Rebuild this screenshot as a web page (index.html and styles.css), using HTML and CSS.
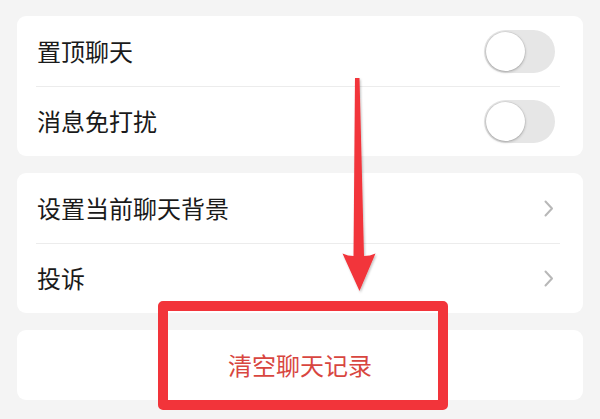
FILE: index.html
```html
<!DOCTYPE html>
<html lang="zh-CN">
<head>
    <meta charset="UTF-8">
    <meta name="viewport" content="width=device-width, initial-scale=1.0">
    <title>聊天设置</title>
    <link rel="stylesheet" href="styles.css">
</head>
<body>
    <div class="page">
        <div class="card">
            <div class="row">
                <span class="row-label">置顶聊天</span>
                <span class="switch"><span class="switch-knob"></span></span>
            </div>
            <div class="row">
                <span class="row-label">消息免打扰</span>
                <span class="switch"><span class="switch-knob"></span></span>
            </div>
        </div>

        <div class="card">
            <div class="row">
                <span class="row-label">设置当前聊天背景</span>
                <svg class="chevron" width="10" height="17" viewBox="0 0 10 17">
                    <path d="M1.5 1.5 L8 8.5 L1.5 15.5" fill="none" stroke="#b8b8b8" stroke-width="2" stroke-linecap="round" stroke-linejoin="round"/>
                </svg>
            </div>
            <div class="row">
                <span class="row-label">投诉</span>
                <svg class="chevron" width="10" height="17" viewBox="0 0 10 17">
                    <path d="M1.5 1.5 L8 8.5 L1.5 15.5" fill="none" stroke="#b8b8b8" stroke-width="2" stroke-linecap="round" stroke-linejoin="round"/>
                </svg>
            </div>
        </div>

        <div class="card">
            <div class="row row-center">
                <span class="danger">清空聊天记录</span>
            </div>
        </div>
    </div>

    <!-- 标注：箭头和红框 -->
    <svg class="mark-arrow" width="600" height="419" viewBox="0 0 600 419">
        <defs>
            <filter id="shadow" x="-20%" y="-20%" width="140%" height="140%">
                <feDropShadow dx="1" dy="1.5" stdDeviation="1.2" flood-color="#000" flood-opacity="0.25"/>
            </filter>
        </defs>
        <path d="M355 78 L359.5 78 L364 256 Q370 256 375.5 253.5 L359.5 291 L342.5 253.5 Q348 256 353.5 256 Z" fill="#f2343a" filter="url(#shadow)"/>
    </svg>
    <div class="mark-box"></div>
</body>
</html>
```

FILE: styles.css
```css
body {
    margin: 0;
    padding: 0;
    background-color: #f4f4f4;
    font-family: "Noto Sans CJK SC", "Noto Sans", sans-serif;
    color: #1a1a1a;
}

.page {
    padding: 16px 17px;
    display: flex;
    flex-direction: column;
    gap: 17px;
}

.card {
    background-color: #fff;
    border-radius: 9px;
}

.row {
    height: 70px;
    display: flex;
    align-items: center;
    justify-content: space-between;
    padding: 0 28px 0 20px;
    position: relative;
}

.row + .row::before {
    content: "";
    position: absolute;
    top: 0;
    left: 19px;
    right: 23px;
    height: 1px;
    background-color: #ececec;
}

.row-label {
    font-size: 24px;
    line-height: 1;
}

.row-center {
    justify-content: center;
    padding: 0;
}

.danger {
    font-size: 24px;
    line-height: 1;
    color: #d8463f;
}

.switch {
    width: 71px;
    height: 43px;
    border-radius: 22px;
    background-color: #e6e6e6;
    display: flex;
    align-items: center;
    padding-left: 2px;
    box-sizing: border-box;
}

.switch-knob {
    width: 39px;
    height: 39px;
    border-radius: 50%;
    background-color: #fff;
    box-shadow: 0 1px 3px rgba(0, 0, 0, 0.28), 0 0 0 0.5px rgba(0, 0, 0, 0.08);
}

.chevron {
    margin-right: 1px;
}

.mark-arrow {
    position: absolute;
    top: 0;
    left: 0;
}

.mark-box {
    position: absolute;
    left: 158px;
    top: 301px;
    width: 290px;
    height: 109px;
    box-sizing: border-box;
    border: 10px solid #f2343a;
    border-radius: 5px;
}
```
